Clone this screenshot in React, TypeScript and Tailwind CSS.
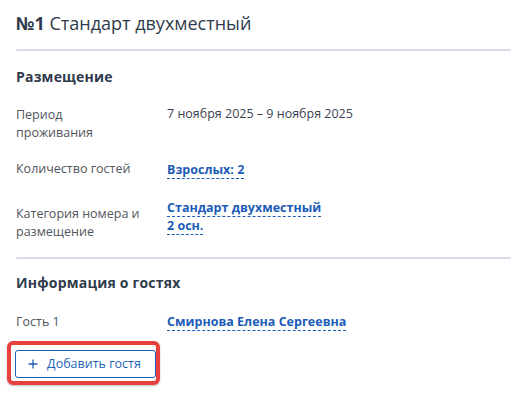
import React from "react";

const font = { fontFamily: '"Open Sans", "Noto Sans", sans-serif' };

function Value({ children }: { children: React.ReactNode }) {
  return (
    <span className="font-bold text-[#1c5cb6] border-b border-dashed border-[#1c5cb6] leading-[18px]">
      {children}
    </span>
  );
}

export default function App() {
  return (
    <div className="min-h-[395px] bg-white px-4" style={font}>
      <div className="pt-[10px] pb-[13px] text-[18px] leading-[26px] text-[#2f3b4c]">
        <span className="font-bold">№1</span> Стандарт двухместный
      </div>
      <div className="h-[2px] rounded-full bg-[#d5dce5]" />

      <div className="pt-[16px] text-[14px] leading-[20px] font-bold tracking-[0.2px] text-[#2f3b4c]">
        Размещение
      </div>

      <div className="mt-[19px] flex flex-col text-[12.5px] leading-[18px]">
        <div className="flex items-start">
          <div className="w-[151px] shrink-0 text-[#50565e]">
            Период
            <br />
            проживания
          </div>
          <div className="mt-[-1px] text-[#3a4352]">7 ноября 2025 – 9 ноября 2025</div>
        </div>

        <div className="mt-[18px] flex items-start">
          <div className="w-[151px] shrink-0 text-[#50565e]">Количество гостей</div>
          <div className="mt-[1px]">
            <Value>Взрослых: 2</Value>
          </div>
        </div>

        <div className="mt-[26px] flex items-start">
          <div className="w-[151px] shrink-0 text-[#50565e]">
            Категория номера и
            <br />
            размещение
          </div>
          <div className="mt-[-6px]">
            <Value>Стандарт двухместный</Value>
            <br />
            <Value>2 осн.</Value>
          </div>
        </div>
      </div>

      <div className="mt-[16px] h-[2px] rounded-full bg-[#d5dce5]" />

      <div className="pt-[14px] text-[14px] leading-[20px] font-bold tracking-[0.2px] text-[#2f3b4c]">
        Информация о гостях
      </div>

      <div className="mt-[20px] flex items-start text-[12.5px] leading-[18px]">
        <div className="w-[151px] shrink-0 text-[#50565e]">Гость 1</div>
        <div>
          <Value>Смирнова Елена Сергеевна</Value>
        </div>
      </div>

      <div className="mt-[19px] relative inline-block ml-[-1px]">
        <button className="flex h-[28px] w-[141px] items-center justify-center gap-[9px] rounded-[3px] border border-[#1f5fb8] bg-white text-[12.5px] text-[#1f5fb8]">
          <svg width="10" height="10" viewBox="0 0 10 10" className="ml-[-2px]">
            <path d="M5 0.5V9.5M0.5 5H9.5" stroke="#1f5fb8" strokeWidth="1.3" />
          </svg>
          <span>Добавить гостя</span>
        </button>
        <div className="pointer-events-none absolute left-[-8px] top-[-9px] right-[-4px] bottom-[-7px] rounded-[6px] border-[4px] border-[#e8403f] shadow-[0_1px_2px_rgba(0,0,0,0.25)]" />
      </div>
    </div>
  );
}
